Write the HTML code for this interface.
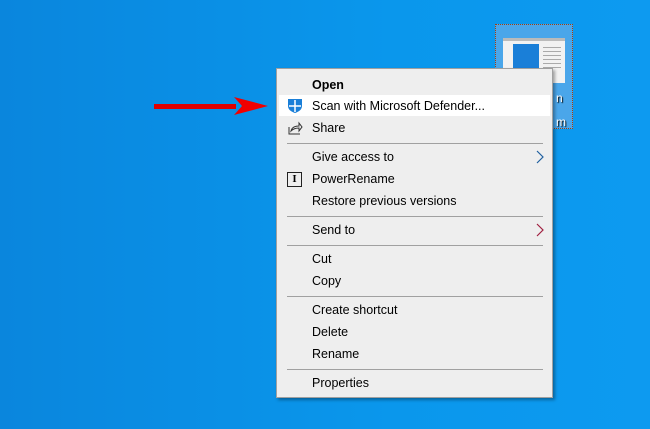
<!DOCTYPE html>
<html><head><style>
body{margin:0;width:650px;height:429px;overflow:hidden;background:linear-gradient(90deg,#0a86dd,#0a97ec 60%,#0d9af0);font-family:"Liberation Sans",sans-serif;position:relative}
.sel{position:absolute;left:495px;top:24px;width:76px;height:103px;background:#4aa6ea;border:1px dotted #a04010}
.thumb{position:absolute;left:503px;top:38px;width:62px;height:42px;background:#f2f2f2;border-top:3px solid #bbb}
.thumb .b{position:absolute;left:10px;top:3px;width:26px;height:36px;background:#1a7fd8}
.thumb .l{position:absolute;left:40px;width:18px;height:1px;background:#aaa}
.lbl{position:absolute;color:#fff;font-size:12px;text-shadow:1px 1px 1px #000}
.menu{position:absolute;left:276px;top:68px;width:275px;height:328px;background:#eeeeee;border:1px solid #a0a0a0;box-shadow:2px 2px 3px rgba(0,0,0,.35)}
.it{position:absolute;left:35px;font-size:12.5px;color:#000;line-height:16px}
.sep{position:absolute;left:10px;width:256px;height:1px;background:#a0a0a0}
.hl{position:absolute;left:2px;top:26px;width:271px;height:21px;background:#fff}
.chev{position:absolute;left:259px}
</style></head><body>
<div class="sel"></div>
<div class="thumb"><div class="b"></div><div class="l" style="top:6px"></div><div class="l" style="top:10px"></div><div class="l" style="top:14px"></div><div class="l" style="top:18px"></div><div class="l" style="top:22px"></div><div class="l" style="top:26px"></div></div>
<div class="lbl" style="left:556px;top:91px">n</div>
<div class="lbl" style="left:556px;top:115px">m</div>
<svg style="position:absolute;left:150px;top:92px" width="125" height="30"><path d="M4 12h82v5H4z" fill="#e00000"/><path d="M84 5l34 9-34 9 8-9z" fill="#f00000"/></svg>
<div class="menu">
<div class="hl"></div>
<div class="it" style="top:8px;font-weight:bold">Open</div>
<div class="it" style="top:29px">Scan with Microsoft Defender...</div>
<svg style="position:absolute;left:10px;top:29px" width="16" height="16"><path d="M1 1h14v7c0 4-4 6-7 7-3-1-7-3-7-7z" fill="#1a7fd8"/><path d="M8 2v12M2 8h12" stroke="#fff" stroke-width="1.5"/></svg>
<div class="it" style="top:51px">Share</div>
<svg style="position:absolute;left:10px;top:51px" width="16" height="16"><path d="M2 7v7h11M4 11c1-4 4-5 8-5V3l3 4-3 4V8c-3 0-6 1-8 3z" fill="none" stroke="#333" stroke-width="1"/></svg>
<div class="sep" style="top:74px"></div>
<div class="it" style="top:80px">Give access to</div>
<svg class="chev" style="top:81px" width="8" height="14"><path d="M1 1l6 6-6 6" fill="none" stroke="#2060a0" stroke-width="1.2"/></svg>
<div class="it" style="top:102px">PowerRename</div>
<div style="position:absolute;left:10px;top:103px;width:13px;height:13px;border:1px solid #222;font:bold 11px 'Liberation Serif',serif;text-align:center;line-height:13px">I</div>
<div class="it" style="top:124px">Restore previous versions</div>
<div class="sep" style="top:147px"></div>
<div class="it" style="top:153px">Send to</div>
<svg class="chev" style="top:154px" width="8" height="14"><path d="M1 1l6 6-6 6" fill="none" stroke="#a02040" stroke-width="1.2"/></svg>
<div class="sep" style="top:176px"></div>
<div class="it" style="top:182px">Cut</div>
<div class="it" style="top:204px">Copy</div>
<div class="sep" style="top:227px"></div>
<div class="it" style="top:233px">Create shortcut</div>
<div class="it" style="top:255px">Delete</div>
<div class="it" style="top:277px">Rename</div>
<div class="sep" style="top:300px"></div>
<div class="it" style="top:306px">Properties</div>
</div>
</body></html>
